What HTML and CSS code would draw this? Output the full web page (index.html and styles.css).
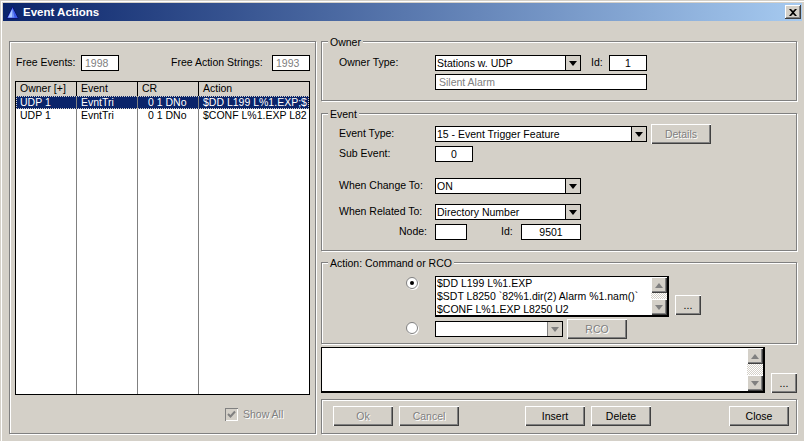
FILE: index.html
```html
<!DOCTYPE html>
<html lang="en">
<head>
<meta charset="utf-8">
<title>Event Actions</title>
<link rel="stylesheet" href="styles.css">
</head>
<body>
<div class="window">
  <header class="titlebar">
    <svg class="app-icon" width="13" height="13" viewBox="0 0 13 13"><path d="M6.500 .5 L12.500 12.500 H.5 Z" fill="#3a5ae8" stroke="#0a1470"/><path d="M6.500 2.500 L6.500 11.500 H2 Z" fill="#a8c4ff"/><path d="M6.500 2.500 L8.500 11.500 H6.500 Z" fill="#6f90f4"/></svg>
    <span class="title-text">Event Actions</span>
    <span class="close-btn"><svg width="8" height="7" viewBox="0 0 8 7"><path d="M0 0h2l2 2 2-2h2L5 3.500 8 7H6L4 5 2 7H0l3-3.500z" fill="#000"/></svg></span>
  </header>
  <main class="content">
    <section class="group left-panel">
      <div class="free-row">
        <span class="lbl free-events">Free Events:</span>
        <span class="box box-free dis">1998</span>
        <span class="lbl free-actions">Free Action Strings:</span>
        <span class="box box-free dis">1993</span>
      </div>
      <div class="table">
        <div class="tr th"><span class="c1">Owner [+]</span><span class="c2">Event</span><span class="c3">CR</span><span class="c4">Action</span></div>
        <div class="tr sel"><span class="c1">UDP 1</span><span class="c2">EvntTri</span><span class="c3 cr">0 1 DNo</span><span class="c4">$DD L199 L%1.EXP;$</span></div>
        <div class="tr"><span class="c1">UDP 1</span><span class="c2">EvntTri</span><span class="c3 cr">0 1 DNo</span><span class="c4">$CONF L%1.EXP L82</span></div>
        <div class="tr fill"><span class="c1"></span><span class="c2"></span><span class="c3"></span><span class="c4"></span></div>
      </div>
      <div class="showall">
        <span class="check"><svg width="9" height="9" viewBox="0 0 9 9"><path d="M1 4 L3.500 6.500 L8 1.500" fill="none" stroke="#808080" stroke-width="2"/></svg></span>
        <span class="dis etched">Show All</span>
      </div>
    </section>
    <div class="right">
      <section class="group owner">
        <span class="legend">Owner</span>
        <div class="row">
          <span class="lbl label-col">Owner Type:</span>
          <span class="select w146"><span class="val">Stations w. UDP</span><span class="arrow"><i class="tri-down"></i></span></span>
          <span class="lbl id-label">Id:</span>
          <span class="box w38 center">1</span>
        </div>
        <div class="row row-name">
          <span class="label-col"></span>
          <span class="box w212 dis">Silent Alarm</span>
        </div>
      </section>
      <section class="group event">
        <span class="legend">Event</span>
        <div class="row r-type">
          <span class="lbl label-col">Event Type:</span>
          <span class="select w212"><span class="val">15 - Event Trigger Feature</span><span class="arrow"><i class="tri-down"></i></span></span>
          <span class="btn disabled details">Details</span>
        </div>
        <div class="row r-sub">
          <span class="lbl label-col">Sub Event:</span>
          <span class="box w38 center">0</span>
        </div>
        <div class="row r-change">
          <span class="lbl label-col">When Change To:</span>
          <span class="select w146"><span class="val">ON</span><span class="arrow"><i class="tri-down"></i></span></span>
        </div>
        <div class="row r-related">
          <span class="lbl label-col">When Related To:</span>
          <span class="select w146"><span class="val">Directory Number</span><span class="arrow"><i class="tri-down"></i></span></span>
        </div>
        <div class="row r-node">
          <span class="lbl label-col right-align">Node:</span>
          <span class="box w32"></span>
          <span class="lbl id2-label">Id:</span>
          <span class="box w60 center">9501</span>
        </div>
      </section>
      <section class="group action">
        <span class="legend">Action: Command or RCO</span>
        <div class="row r-list">
          <span class="radio on"><i class="dot"></i></span>
          <div class="listbox">
            <div class="list-text"><div>$DD L199 L%1.EXP</div><div>$SDT L8250 `82%1.dir(2) Alarm %1.nam()`</div><div>$CONF L%1.EXP L8250 U2</div></div>
            <div class="scroll">
              <span class="sbtn"><i class="tri-up"></i></span><span class="strack"></span><span class="sbtn"><i class="tri-down"></i></span>
            </div>
          </div>
          <span class="btn dots">...</span>
        </div>
        <div class="row r-rco">
          <span class="radio"></span>
          <span class="select w128"><span class="val"></span><span class="arrow off"><i class="tri-down"></i></span></span>
          <span class="btn disabled rco">RCO</span>
        </div>
      </section>
      <div class="memo-row">
        <div class="listbox memo">
          <div class="list-text"></div>
          <div class="scroll">
            <span class="sbtn"><i class="tri-up"></i></span><span class="strack"></span><span class="sbtn"><i class="tri-down"></i></span>
          </div>
        </div>
        <span class="btn dots dots-memo">...</span>
      </div>
      <section class="group buttons">
        <span class="btn disabled">Ok</span>
        <span class="btn disabled">Cancel</span>
        <span class="btn insert">Insert</span>
        <span class="btn">Delete</span>
        <span class="btn close">Close</span>
      </section>
    </div>
  </main>
</div>
</body>
</html>
```
FILE: styles.css
```css
* { box-sizing: border-box; }
html, body { margin: 0; padding: 0; }
body { width: 804px; height: 441px; overflow: hidden; background: #d4d0c8; }
.window {
  width: 804px; height: 441px; background: #d4d0c8;
  padding: 3px 2px 0 3px;
  font: 10.5px/14px "Liberation Sans", Arial, sans-serif; color: #000;
  box-shadow: inset 1px 1px 0 #d4d0c8, inset 2px 2px 0 #fff;
}
.titlebar {
  height: 18px; display: flex; align-items: center; padding: 0 1px 0 3px;
  background: linear-gradient(90deg, #0a246a, #a6caf0);
}
.app-icon { flex: none; margin-right: 4px; }
.title-text { color: #fff; font-weight: bold; font-size: 11.500px; flex: 1; }
.close-btn {
  width: 16px; height: 14px; background: #d4d0c8; display: flex; align-items: center; justify-content: center;
  box-shadow: inset -1px -1px 0 #404040, inset 1px 1px 0 #fff, inset -2px -2px 0 #808080;
}
.content { display: flex; padding: 20px 0 0 6px; gap: 5px; }
.group {
  position: relative; border: 1px solid #808080;
  box-shadow: 1px 1px 0 #fff, inset 1px 1px 0 #fff;
}
.legend { position: absolute; top: -6px; left: 6px; padding: 0 2px; background: #d4d0c8; line-height: 13px; }
.left-panel { width: 307px; height: 393px; padding: 13px 5px 0 5px; }
.free-row { display: flex; align-items: flex-start; height: 16px; }
.free-events { width: 66px; padding-left: 1px; }
.free-actions { margin-left: 52px; width: 101px; }
.lbl { white-space: nowrap; }
.box { display: block; height: 16px; background: #fff; border: 1px solid #000; line-height: 14px; padding: 0 3px; white-space: nowrap; flex: none; }
.box-free { width: 38px; }
.dis { color: #808080; }
.center { text-align: center; }
.w32 { width: 32px; } .w38 { width: 38px; } .w60 { width: 60px; } .w128 { width: 128px; } .w146 { width: 146px; } .w212 { width: 212px; }
.table { margin-top: 10px; height: 314px; border: 1px solid #000; background: #fff; display: flex; flex-direction: column; width: 295px; }
.tr { display: flex; height: 13px; flex: none; line-height: 13px; }
.tr span { display: block; overflow: hidden; white-space: nowrap; padding-left: 4px; border-right: 1px solid #808080; }
.c1, .c2, .c3 { width: 61px; flex: none; }
.c4 { flex: 1; border-right: 0 !important; }
.tr .cr { padding-left: 10px; }
.th { height: 14px; background: #d4d0c8; }
.th span { border-right: 1px solid #000; }
.sel { background: #0a246a; color: #fff; outline: 1px dotted #d4d0c8; outline-offset: -1px; }
.fill { flex: 1; }
.showall { display: flex; align-items: center; margin-top: 12px; padding-left: 210px; gap: 5px; }
.check { width: 13px; height: 13px; background: #d4d0c8; display: flex; align-items: center; justify-content: center;
  box-shadow: inset 1px 1px 0 #808080, inset -1px -1px 0 #fff; }
.etched { text-shadow: 1px 1px 0 #fff; }
.right { width: 476px; display: flex; flex-direction: column; }
.row { display: flex; align-items: flex-start; }
.label-col { width: 96px; flex: none; }
.owner { height: 60px; padding: 13px 0 0 17px; }
.id-label { margin-left: 10px; width: 18px; }
.row-name { margin-top: 3px; }
.event { margin-top: 12px; height: 138px; padding: 10px 0 0 17px; }
.r-type { height: 20px; padding-top: 2px; }
.details { margin: -2px 0 0 4px; }
.r-sub { margin-top: 2px; }
.r-change { margin-top: 16px; }
.r-related { margin-top: 10px; }
.r-node { margin-top: 4px; }
.right-align { text-align: right; padding-right: 8px; }
.id2-label { margin-left: 34px; width: 20px; }
.select { display: flex; height: 16px; border: 1px solid #000; background: #fff; flex: none; }
.val { flex: 1; padding-left: 1px; line-height: 14px; white-space: nowrap; }
.arrow { width: 15px; background: #d4d0c8; border-left: 1px solid #000; display: flex; align-items: center; justify-content: center; flex: none; }
.arrow.off { border-left-color: #808080; }
.tri-down, .tri-up { display: block; width: 0; height: 0; border-left: 4px solid transparent; border-right: 4px solid transparent; }
.tri-down { border-top: 5px solid #000; }
.tri-up { border-bottom: 5px solid #000; }
.off .tri-down { border-top-color: #808080; }
.btn {
  display: flex; align-items: center; justify-content: center; width: 60px; height: 20px; flex: none;
  background: #d4d0c8;
  box-shadow: inset 1px 1px 0 #fff, inset -1px -1px 0 #404040, inset -2px -2px 0 #808080;
}
.disabled { color: #808080; text-shadow: 1px 1px 0 #fff; }
.dots { width: 26px; margin: 19px 0 0 6px; }
.dots-memo { margin-top: 26px; }
.action { margin-top: 11px; height: 82px; padding: 13px 0 0 84px; }
.radio { width: 12px; height: 12px; flex: none; border-radius: 50%; background: #fff; margin: 1px 17px 0 0;
  border: 1px solid #808080; box-shadow: 1px 1px 0 0 #fff; display: flex; align-items: center; justify-content: center; }
.dot { display: block; width: 4px; height: 4px; border-radius: 50%; background: #000; }
.listbox { display: flex; width: 234px; height: 41px; border: 1px solid #000; border-right-width: 2px; border-bottom-width: 2px; background: #fff; flex: none; }
.list-text { flex: 1; padding-left: 1px; line-height: 13px; white-space: nowrap; overflow: hidden; }
.scroll { width: 16px; display: flex; flex-direction: column; flex: none; }
.sbtn { height: 16px; flex: none; background: #d4d0c8; display: flex; align-items: center; justify-content: center;
  box-shadow: inset 1px 1px 0 #fff, inset -1px -1px 0 #404040, inset -2px -2px 0 #808080; }
.sbtn .tri-up { border-bottom-color: #808080; }
.sbtn .tri-down { border-top-color: #808080; }
.strack { flex: 1; background: repeating-conic-gradient(#fff 0 25%, #d4d0c8 0 50%) 0 0 / 2px 2px; }
.r-rco { margin-top: 2px; height: 20px; padding-top: 2px; }
.r-rco .radio { margin-top: 1px; }
.rco { margin: -2px 0 0 4px; }
.memo-row { display: flex; margin-top: 3px; height: 46px; }
.memo { width: 444px; height: 46px; }
.buttons { margin-top: 6px; height: 35px; display: flex; padding: 6px 7px 0 11px; gap: 6px; }
.insert { margin-left: 60px; }
.close { margin-left: 72px; }
```
